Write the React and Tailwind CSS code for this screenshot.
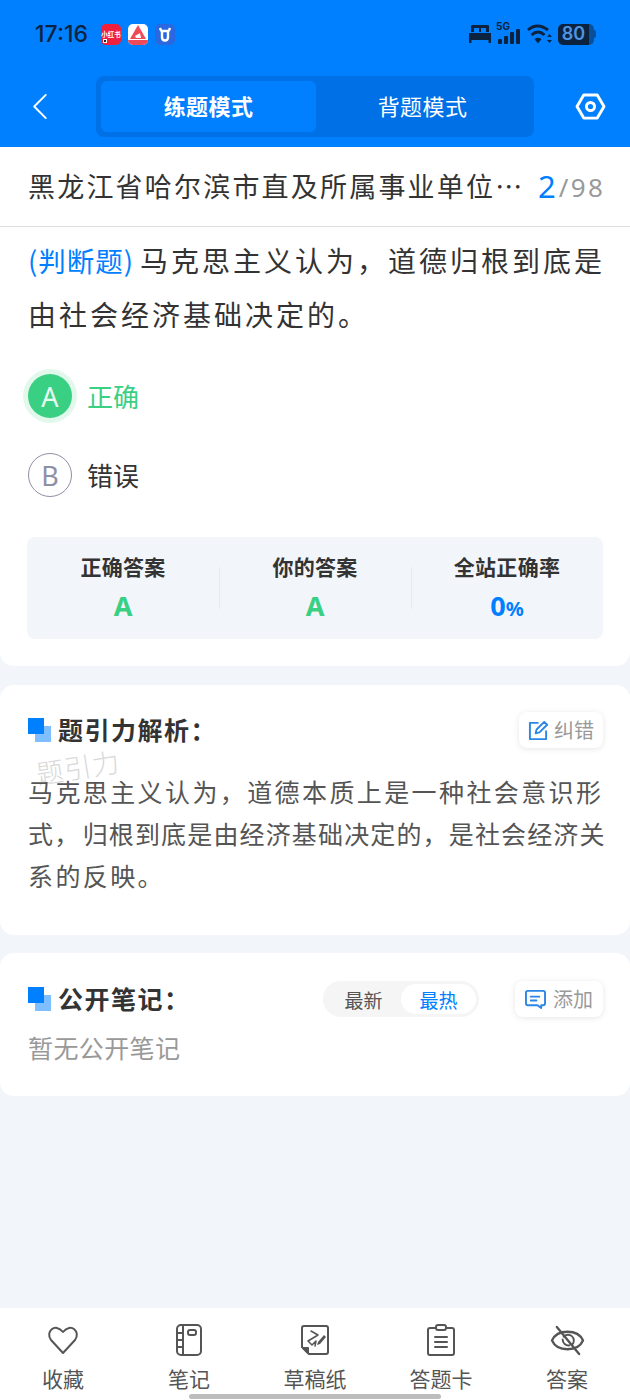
import React from "react";

const font = { fontFamily: '"Noto Sans CJK SC", "Noto Sans", sans-serif' };

function StatusBar() {
  return (
    <div className="h-[76px] flex items-start justify-between pl-[35px] pr-[35px] pt-[22px]">
      <div className="flex items-center h-[24px]">
        <span className="text-[23px] leading-[24px] font-medium text-[#0c2340] w-[66px] font-['Inter']">17:16</span>
        <div className="relative w-[20px] h-[21px] rounded-[5px] bg-[#f0203c] flex items-center justify-center overflow-hidden">
          <span className="text-[6.5px] leading-none text-white font-bold whitespace-nowrap">小红书</span>
          <div className="absolute left-[2px] bottom-[2px] w-[4px] h-[4px] bg-[#222] border border-white" />
        </div>
        <div className="w-[20px] h-[21px] rounded-[5px] bg-white ml-[7px] overflow-hidden">
          <svg viewBox="0 0 20 21" className="w-[20px] h-[21px]">
            <path d="M10 1 L18 15 H2 Z" fill="#f04a58" />
            <path d="M7 12 L12 9 L13 14 H8 Z" fill="#fff" />
            <rect x="0" y="16" width="20" height="5" fill="#f04a58" />
          </svg>
        </div>
        <div className="w-[20px] h-[21px] rounded-[5px] bg-[#2a68e0] ml-[7px] flex items-center justify-center">
          <svg viewBox="0 0 20 21" className="w-[20px] h-[21px]" fill="none" stroke="#fff" strokeWidth="2.4">
            <path d="M5 4 Q6 7 7 7 H13 Q14 7 15 4" />
            <path d="M7 7 V13 Q7 16.5 10 16.5 Q13 16.5 13 13 V7" />
          </svg>
        </div>
      </div>
      <div className="flex items-center h-[24px] mr-[-1px]">
        <svg viewBox="0 0 22 20" className="w-[22px] h-[20px]" fill="#0c2340">
          <path d="M3 1 H19 Q20 1 20 2 V8 H2 V2 Q2 1 3 1 Z" />
          <path d="M0 9 H22 V19 H19.5 V16 H2.5 V19 H0 Z" />
          <rect x="5" y="4" width="5" height="4" fill="#0080ff" />
          <rect x="12" y="4" width="5" height="4" fill="#0080ff" />
        </svg>
        <div className="relative w-[25px] h-[24px] ml-[5px]">
          <span className="absolute left-0 top-[-1px] text-[10px] leading-[10px] font-bold text-[#0c2340] font-['Inter']">5G</span>
          <div className="absolute left-[2px] bottom-[2px] flex items-end gap-[2.5px]">
            <div className="w-[3.5px] h-[5px] bg-[#0c2340] rounded-[1px]" />
            <div className="w-[3.5px] h-[8px] bg-[#0c2340] rounded-[1px]" />
            <div className="w-[3.5px] h-[12px] bg-[#0c2340] rounded-[1px]" />
            <div className="w-[3.5px] h-[15px] bg-[#0c2340] rounded-[1px]" />
          </div>
        </div>
        <svg viewBox="0 0 26 22" className="w-[26px] h-[22px] ml-[6px]" fill="none" stroke="#0c2340" strokeWidth="3">
          <path d="M1 7 Q10 -1 21 7" />
          <path d="M4.5 12 Q11 6 17.5 12" />
          <path d="M7.5 16 L11 20.5 L14.5 16 Q11 13.5 7.5 16 Z" fill="#0c2340" stroke="none" />
          <path d="M20 14 L22.5 11 L25 14 Z M20 17 L22.5 20 L25 17 Z" fill="#0c2340" stroke="none" />
        </svg>
        <div className="flex items-center ml-[5px]">
          <div className="w-[31px] h-[21px] bg-[#0c2340] rounded-l-[5px] flex items-center justify-center">
            <span className="text-[18px] leading-none font-semibold text-[#4f94e0] font-['Inter']">80</span>
          </div>
          <div className="w-[5px] h-[21px] bg-[#0a4f9c] rounded-r-[5px]" />
          <div className="w-[2px] h-[8px] bg-[#0a4f9c] rounded-r-[2px]" />
        </div>
      </div>
    </div>
  );
}

function Nav() {
  return (
    <div className="h-[61px] flex items-center relative">
      <div className="w-[96px] pl-[32px] flex items-center">
        <svg viewBox="0 0 16 28" className="w-[16px] h-[27px]" fill="none" stroke="#fff" strokeWidth="2" strokeLinecap="round" strokeLinejoin="round">
          <path d="M14 2 L2 14 L14 26" />
        </svg>
      </div>
      <div className="w-[438px] h-[61px] bg-[#0070e6] rounded-[8px] p-[5px] flex">
        <div className="w-[215px] h-[51px] pb-[2px] bg-[#0080ff] rounded-[6px] flex items-center justify-center text-[22px] tracking-[0.4px] font-bold text-white">练题模式</div>
        <div className="flex-1 h-[51px] pb-[2px] flex items-center justify-center text-[22px] tracking-[0.4px] text-white">背题模式</div>
      </div>
      <div className="flex-1 flex justify-center pl-[16px]">
        <svg viewBox="0 0 32 28" className="w-[31px] h-[27px]" fill="none" stroke="#fff" strokeWidth="3" strokeLinejoin="round">
          <path d="M9 2 H23 L30 14 L23 26 H9 L2 14 Z" />
          <circle cx="16" cy="14" r="4.2" />
        </svg>
      </div>
    </div>
  );
}

function Option({ letter, text, active }) {
  return (
    <div className="flex items-center h-[44px] pl-[28px]">
      {active ? (
        <div className="w-[44px] h-[44px] rounded-full bg-[#3ad084] flex items-center justify-center text-[27px] leading-none text-[#e8faf0] shadow-[0_0_0_5px_#e2f8ec] font-['Noto_Sans']">{letter}</div>
      ) : (
        <div className="w-[44px] h-[44px] rounded-full border border-[#8e90a6] flex items-center justify-center text-[27px] leading-none text-[#8e90a6] font-['Noto_Sans']">{letter}</div>
      )}
      <span className={`ml-[15px] text-[26px] leading-none ${active ? "text-[#3ad084]" : "text-[#333333]"}`}>{text}</span>
    </div>
  );
}

function Stat({ label, value, tone, divider }) {
  return (
    <div className="relative flex-1 flex flex-col items-center pt-[14px]">
      {divider && <div className="absolute left-0 top-[30px] h-[42px] w-px bg-[#e6ebf0]" />}
      <div className="text-[21px] leading-[30px] tracking-[0.3px] font-bold text-[#333333]">{label}</div>
      <div className={`mt-[8px] text-[27px] leading-[34px] font-bold font-['Noto_Sans'] ${tone}`}>{value}</div>
    </div>
  );
}

function Mark() {
  return (
    <div className="relative w-[23px] h-[24px] shrink-0">
      <div className="absolute right-0 bottom-0 w-[16px] h-[16px] bg-[#80bfff]" />
      <div className="absolute left-0 top-0 w-[16px] h-[16px] bg-[#0080ff]" />
    </div>
  );
}

function SmallButton({ icon, label, width, gap }) {
  return (
    <div className={`${width} h-[36px] rounded-[8px] bg-white shadow-[0_1px_6px_rgba(0,0,0,0.1)] flex items-center justify-center ${gap} text-[20px] leading-none text-[#999999]`}>
      {icon}
      <span>{label}</span>
    </div>
  );
}

function Tab({ icon, label }) {
  return (
    <div className="flex-1 flex flex-col items-center pt-[15px]">
      <div className="h-[34px] flex items-center justify-center">{icon}</div>
      <div className="mt-[6px] text-[21px] leading-[30px] text-[#555555]">{label}</div>
    </div>
  );
}

export default function App() {
  return (
    <div className="relative w-[630px] h-[1400px] overflow-hidden bg-[#f2f5f9] flex flex-col" style={font}>
      <div className="h-[147px] bg-[#0080ff] shrink-0">
        <StatusBar />
        <Nav />
      </div>

      <div className="bg-white rounded-b-[14px] h-[519px] shrink-0">
        <div className="h-[80px] border-b border-[#dddddd] flex items-center pl-[28px] pr-[20px]">
          <span className="mb-[3px] shrink-0 text-[27px] leading-none text-[#333333] tracking-[2.2px] whitespace-nowrap w-[510px]">黑龙江省哈尔滨市直及所属事业单位…</span>
          <span className="text-[31px] leading-none text-[#0080ff] font-['Noto_Sans']">2</span>
          <span className="text-[26px] leading-none text-[#999999] ml-[3px] tracking-[2.4px] font-['Noto_Sans']">/98</span>
        </div>
        <div className="pl-[28px] pr-[16px] pt-[6px] text-[28px] leading-[54px] text-[#333333] tracking-[3px]">
          <span className="text-[#0080ff] text-[27.5px] tracking-[1px]">(判断题)</span>
          <span className="ml-[6px]">马克思主义认为，道德归根到底是由社会经济基础决定的。</span>
        </div>
        <div className="mt-[33px] flex flex-col gap-[35px]">
          <Option letter="A" text="正确" active />
          <Option letter="B" text="错误" />
        </div>
        <div className="mx-[27px] mt-[40px] h-[102px] bg-[#f2f5f9] rounded-[8px] flex">
          <Stat label="正确答案" value="A" tone="text-[#3ad084]" />
          <Stat label="你的答案" value="A" tone="text-[#3ad084]" divider />
          <Stat label="全站正确率" value={<span>0<span className="text-[20px]">%</span></span>} tone="text-[#0080ff]" divider />
        </div>
      </div>

      <div className="relative mt-[19px] bg-white rounded-[14px] h-[250px] shrink-0 pl-[28px] pr-[27px] pt-[27px]">
        <div className="flex items-center justify-between h-[36px]">
          <div className="flex items-center gap-[7px]">
            <Mark />
            <span className="pb-[2px] text-[25px] leading-none font-bold text-[#333333] tracking-[1.5px]">题引力解析：</span>
          </div>
          <SmallButton
            label="纠错"
            width="w-[84px]"
            gap="gap-[5px]"
            icon={
              <svg viewBox="0 0 22 22" className="w-[21px] h-[21px]" fill="none" stroke="#2b86e6" strokeWidth="2" strokeLinejoin="round">
                <path d="M11 3 H2 V20 H19 V11" />
                <path d="M8 14 L9 10 L17 2 L20 5 L12 13 Z" />
              </svg>
            }
          />
        </div>
        <div className="absolute left-[36px] top-[68px] text-[27px] leading-none font-light text-[#d9d9d9] rotate-[-9deg] tracking-[1px]">题引力</div>
        <div className="relative mt-[22px] text-[25px] leading-[42px] text-[#555555] whitespace-nowrap">
          <div className="tracking-[2.4px]">马克思主义认为，道德本质上是一种社会意识形</div>
          <div className="tracking-[1.15px]">式<span className="tracking-[3.5px]">，</span>归根到底是由经济基础决定的，是社会经济关</div>
          <div className="tracking-[2.4px]">系的反映。</div>
        </div>
      </div>

      <div className="mt-[18px] bg-white rounded-[14px] h-[143px] shrink-0 pl-[28px] pr-[27px] pt-[28px]">
        <div className="flex items-center h-[36px]">
          <Mark />
          <span className="pb-[2px] ml-[7px] text-[25px] leading-none font-bold text-[#333333] tracking-[1.5px]">公开笔记：</span>
          <div className="ml-auto w-[156px] h-[36px] rounded-full bg-[#f5f5f5] flex items-center p-[3px]">
            <div className="w-[75px] text-center text-[19px] leading-none text-[#555555]">最新</div>
            <div className="flex-1 h-[30px] rounded-full bg-white flex items-center justify-center text-[19px] leading-none text-[#0080ff]">最热</div>
          </div>
          <div className="ml-[36px]">
            <SmallButton
              label="添加"
              width="w-[88px]"
              gap="gap-[7px]"
              icon={
                <svg viewBox="0 0 22 22" className="w-[21px] h-[21px]" fill="none" stroke="#2b86e6" strokeWidth="2" strokeLinejoin="round" strokeLinecap="round">
                  <path d="M3 2 H19 Q21 2 21 4 V15 Q21 17 19 17 H17 V20 L13 17 H3 Q1 17 1 15 V4 Q1 2 3 2 Z" />
                  <path d="M6 8 H15 M6 12 H12" />
                </svg>
              }
            />
          </div>
        </div>
        <div className="mt-[12px] text-[25px] leading-[36px] text-[#999999] tracking-[0.4px]">暂无公开笔记</div>
      </div>

      <div className="mt-auto h-[92px] bg-white flex shrink-0">
        <Tab
          label="收藏"
          icon={
            <svg viewBox="0 0 32 30" className="w-[32px] h-[30px]" fill="none" stroke="#555" strokeWidth="2" strokeLinejoin="round">
              <path d="M16 28 L4 15 C-2 7 8 -3 16 7 C24 -3 34 7 28 15 Z" />
            </svg>
          }
        />
        <Tab
          label="笔记"
          icon={
            <svg viewBox="0 0 26 32" className="w-[26px] h-[32px]" fill="none" stroke="#555" strokeWidth="2" strokeLinejoin="round">
              <rect x="1" y="1" width="24" height="30" rx="4" />
              <path d="M7 1 V31 M1 9 H7 M1 16 H7 M1 23 H7" />
              <rect x="12" y="6" width="8" height="5" rx="2" />
            </svg>
          }
        />
        <Tab
          label="草稿纸"
          icon={
            <svg viewBox="0 0 30 32" className="w-[30px] h-[32px]" fill="none" stroke="#555" strokeWidth="2" strokeLinejoin="round" strokeLinecap="round">
              <path d="M4 2 H26 Q28 2 28 4 V28 Q28 30 26 30 H9 L2 23 V4 Q2 2 4 2 Z" />
              <path d="M3 24 H8 V29 Z" fill="#555" />
              <path d="M11 7 L18 11 L8 17 L12 21 L16 17 L15 22" strokeWidth="1.5" />
              <path d="M17 21 L18 18 L24 11 L26 13 L20 20 Z" fill="#555" stroke="none" />
            </svg>
          }
        />
        <Tab
          label="答题卡"
          icon={
            <svg viewBox="0 0 28 32" className="w-[28px] h-[32px]" fill="none" stroke="#555" strokeWidth="2" strokeLinejoin="round" strokeLinecap="round">
              <path d="M8 4 H3 Q1 4 1 6 V29 Q1 31 3 31 H25 Q27 31 27 29 V6 Q27 4 25 4 H20" />
              <rect x="9" y="1" width="10" height="5" rx="2" />
              <path d="M8 13 H20 M8 18 H20 M8 23 H20" />
            </svg>
          }
        />
        <Tab
          label="答案"
          icon={
            <svg viewBox="0 0 36 32" className="w-[35px] h-[31px]" fill="none" stroke="#555" strokeWidth="2.4" strokeLinecap="round" strokeLinejoin="round">
              <path d="M2 16 Q6 7 18 7 Q30 7 34 16 Q30 25 18 25 Q6 25 2 16 Z" />
              <path d="M14 12 A6 6 0 0 1 23 20" strokeWidth="2" />
              <path d="M13 15 A6 6 0 0 0 20 21" strokeWidth="2" />
              <path d="M7 2 L30 30" />
            </svg>
          }
        />
      </div>

      <div className="absolute left-[189px] bottom-[1px] w-[252px] h-[5px] rounded-full bg-[#bdbdbd]" />
    </div>
  );
}
